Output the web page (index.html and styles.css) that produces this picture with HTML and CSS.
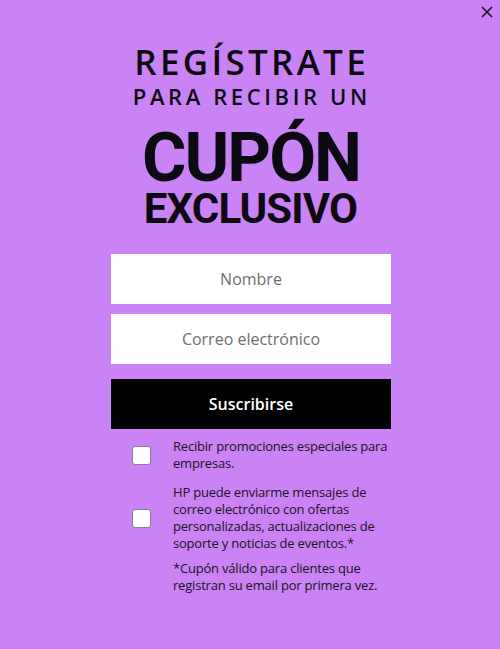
FILE: index.html
```html
<!DOCTYPE html>
<html lang="es">
<head>
<meta charset="utf-8">
<link rel="stylesheet" href="styles.css">
</head>
<body>
<div class="modal">
  <button class="close" aria-label="Cerrar">
    <svg width="12" height="12" viewBox="0 0 12 12"><path d="M1 1L11 11M11 1L1 11" stroke="#1b1320" stroke-width="1.6" fill="none"/></svg>
  </button>
  <div class="title">
    <div class="t1">REGÍSTRATE</div>
    <div class="t2">PARA RECIBIR UN</div>
    <div class="t3">CUPÓN</div>
    <div class="t4">EXCLUSIVO</div>
  </div>
  <form class="form">
    <input class="field" type="text" placeholder="Nombre">
    <input class="field" type="email" placeholder="Correo electrónico">
    <button class="submit" type="button">Suscribirse</button>
    <div class="checks">
      <label class="row"><span class="box"></span><span class="txt">Recibir promociones especiales para empresas.</span></label>
      <label class="row row2"><span class="box"></span><span class="txt">HP puede enviarme mensajes de correo electrónico con ofertas personalizadas, actualizaciones de soporte y noticias de eventos.*</span></label>
      <p class="note">*Cupón válido para clientes que registran su email por primera vez.</p>
    </div>
  </form>
</div>
</body>
</html>
```
FILE: styles.css
```css
html, body {
  margin: 0;
  padding: 0;
}
body {
  width: 500px;
  height: 649px;
  background: #c983f5;
  font-family: "Open Sans", "Noto Sans", sans-serif;
  color: #1a1420;
  overflow: hidden;
}
.modal {
  position: relative;
  height: 649px;
  display: flex;
  flex-direction: column;
  align-items: center;
}
.close {
  position: absolute;
  top: 6px;
  right: 7px;
  background: none;
  border: 0;
  padding: 0;
  width: 12px;
  height: 12px;
  cursor: pointer;
}
.close svg { display: block; }
.title {
  margin-top: 44px;
  display: flex;
  flex-direction: column;
  align-items: center;
  color: #0e0a12;
  line-height: 1;
}
.t1 {
  font-size: 35px;
  letter-spacing: 3.3px;
  margin-right: -3.3px;
  font-weight: 600;
}
.t2 {
  font-size: 22px;
  letter-spacing: 3.6px;
  margin-right: -3.6px;
  margin-top: 6px;
  font-weight: 600;
}
.t3, .t4 {
  font-family: Roboto, "Open Sans", sans-serif;
  font-weight: 700;
}
.t3 {
  font-size: 68px;
  margin-top: 17px;
  letter-spacing: -2px;
  margin-right: -2px;
}
.t4 {
  font-size: 42px;
  letter-spacing: -0.9px;
  margin-right: -0.9px;
  margin-top: -4px;
}
.form {
  width: 280px;
  margin-top: 24px;
  margin-left: 2px;
  display: flex;
  flex-direction: column;
}
.field {
  height: 50px;
  border: 0;
  background: #fff;
  text-align: center;
  font-family: inherit;
  font-size: 16px;
  padding: 0;
  margin-bottom: 10px;
  outline: none;
}
.field::placeholder { color: #6e6e6e; }
.field + .field { margin-bottom: 15px; }
.submit {
  height: 50px;
  background: #000;
  color: #fff;
  border: 0;
  font-family: inherit;
  font-size: 16px;
  font-weight: 600;
}
.checks {
  padding-left: 21px;
  margin-top: 9px;
  display: flex;
  flex-direction: column;
}
.row {
  display: flex;
  align-items: center;
  gap: 21px;
}
.row2 { margin-top: 12px; }
.box {
  flex: none;
  width: 17px;
  height: 17px;
  background: #fff;
  border: 1px solid #8c7a96;
  border-radius: 3px;
}
.txt, .note {
  font-size: 13px;
  line-height: 17px;
  letter-spacing: -0.2px;
  color: #1a1420;
}
.row .txt { margin-left: 1px; }
.note {
  margin: 8px 0 0 41px;
}
```
